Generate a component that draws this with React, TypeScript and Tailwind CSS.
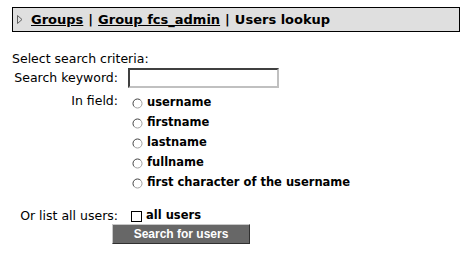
import React from "react";

const fields = ["username", "firstname", "lastname", "fullname", "first character of the username"];

const Radio = () => (
  <svg width="11" height="11" viewBox="0 0 11 11" className="shrink-0">
    <circle cx="5.5" cy="5.5" r="4.5" fill="white" />
    <path d="M2.3 8.7 A4.5 4.5 0 0 1 8.7 2.3" fill="none" stroke="#404040" strokeWidth="1" />
    <path d="M8.7 2.3 A4.5 4.5 0 0 1 2.3 8.7" fill="none" stroke="#a0a0a0" strokeWidth="1" />
  </svg>
);

const Label = ({ children }: { children: React.ReactNode }) => (
  <div className="w-[107px] shrink-0 flex justify-end whitespace-nowrap text-[12.5px] leading-[16px] pr-[1px]">{children}</div>
);

const App = () => {
  return (
    <div className="w-[472px] h-[254px] bg-white text-black pt-[7px] px-[12px]" style={{ fontFamily: '"DejaVu Sans", Verdana, sans-serif' }}>
      <div className="h-[25px] border border-black bg-[#dfdfdf] flex items-center pl-[4px] text-[13px] font-bold">
        <svg width="6" height="9" viewBox="0 0 6 9" className="mr-[8px]">
          <path d="M0.5 0.5 L5 4.5 L0.5 8.5 Z" fill="none" stroke="#606060" strokeWidth="1" />
        </svg>
        <a className="underline">Groups</a>
        <span className="mx-[5px]">|</span>
        <a className="underline">Group fcs_admin</a>
        <span className="mx-[5px]">|</span>
        <span>Users lookup</span>
      </div>

      <div className="mt-[19px] text-[12.5px] leading-[15px]">Select search criteria:</div>

      <div className="flex items-center mt-[2px]">
        <Label>Search keyword:</Label>
        <input
          className="ml-[9px] w-[151px] h-[20px] bg-white border-2 border-t-[#404040] border-l-[#404040] border-r-[#c0c0c0] border-b-[#c0c0c0] outline-none"
          type="text"
        />
      </div>

      <div className="flex mt-[5px]">
        <Label>In field:</Label>
        <div className="ml-[13px] flex flex-col">
          {fields.map((f) => (
            <div key={f} className="h-[20px] flex items-center gap-[4px] text-[11.5px] font-bold">
              <Radio />
              <span>{f}</span>
            </div>
          ))}
        </div>
      </div>

      <div className="flex items-center mt-[15px] h-[16px]">
        <Label>Or list all users:</Label>
        <div className="ml-[12px] flex items-center gap-[4px] text-[11.5px] font-bold">
          <span className="w-[11px] h-[11px] border border-black bg-white" />
          <span>all users</span>
        </div>
      </div>

      <div className="pl-[100px] -mt-[3px]">
        <button
          className="w-[138px] h-[20px] bg-[#676767] text-white text-[12px] font-bold border border-t-[#c8c8c8] border-l-[#c8c8c8] border-r-[#303030] border-b-[#303030]"
          style={{ fontFamily: '"Liberation Sans", Arial, sans-serif' }}
        >
          Search for users
        </button>
      </div>
    </div>
  );
};

export default App;
